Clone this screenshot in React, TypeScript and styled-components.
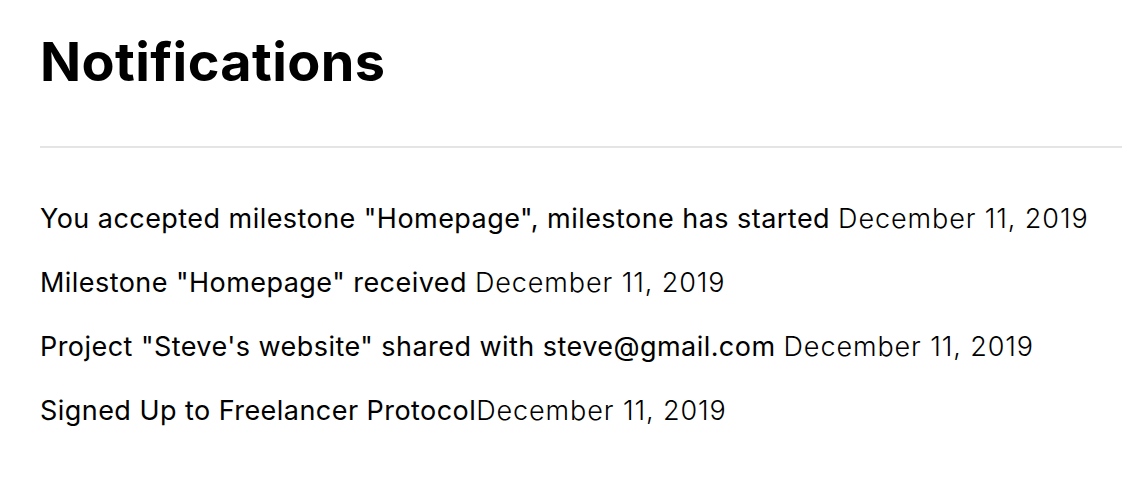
import React from "react";
import styled, { createGlobalStyle } from "styled-components";

const Global = createGlobalStyle`
  html, body { margin: 0; padding: 0; background: #fff; }
  body { font-family: Inter, "Liberation Sans", sans-serif; color: #000; }
`;

const Page = styled.div`
  padding: 29px 0 0 40px;
`;

const Title = styled.h1`
  margin: 0;
  font-size: 54px;
  font-weight: 700;
  line-height: 65px;
  letter-spacing: 0.4px;
`;

const Divider = styled.hr`
  margin: 52px 0 0;
  border: none;
  border-top: 2px solid #e5e5e5;
`;

const List = styled.div`
  display: flex;
  flex-direction: column;
  gap: 30px;
  padding-top: 54px;
`;

const Item = styled.div`
  font-size: 27px;
  line-height: 34px;
  font-weight: 400;
  letter-spacing: 0.45px;
`;

const Date = styled.span`
  font-weight: 300;
  letter-spacing: 0.9px;
`;

const items = [
  { text: 'You accepted milestone "Homepage", milestone has started', sep: " " },
  { text: 'Milestone "Homepage" received', sep: " " },
  { text: 'Project "Steve\'s website" shared with steve@gmail.com', sep: " " },
  { text: "Signed Up to Freelancer Protocol", sep: "" },
];

export default function App() {
  return (
    <Page>
      <Global />
      <Title>Notifications</Title>
      <Divider />
      <List>
        {items.map((it, i) => (
          <Item key={i}>
            {it.text}
            {it.sep}
            <Date>December 11, 2019</Date>
          </Item>
        ))}
      </List>
    </Page>
  );
}
